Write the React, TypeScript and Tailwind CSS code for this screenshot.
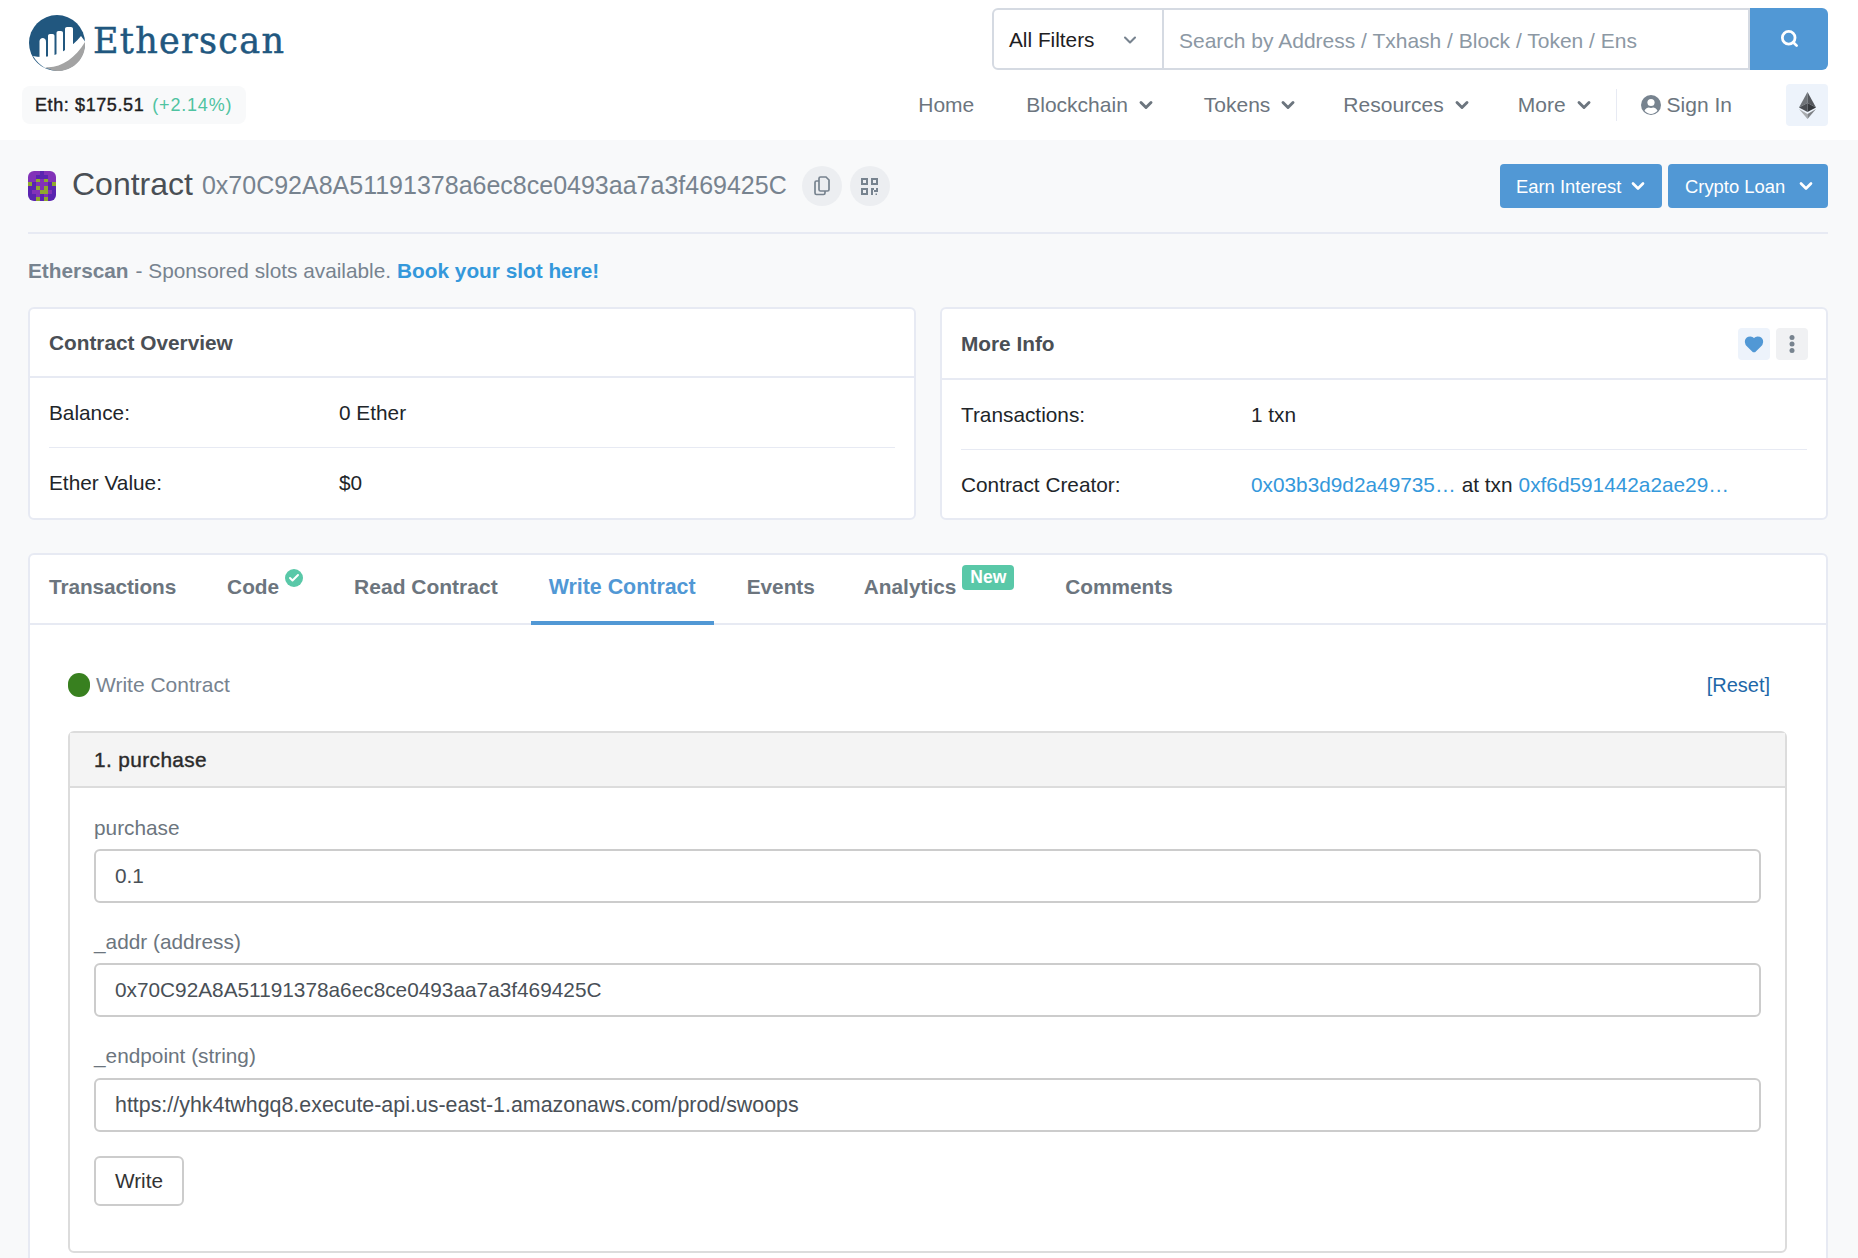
import type { ReactNode } from "react";
import { ChevronDown, Search, Heart, Check } from "lucide-react";

const navItems = [
  { label: "Blockchain", margin: "mr-[48px]" },
  { label: "Tokens", margin: "mr-[45px]" },
  { label: "Resources", margin: "mr-[46px]" },
  { label: "More", margin: "mr-[22px]" },
];

const Logo = () => (
  <svg width="56" height="56" viewBox="0 0 56 56" className="shrink-0">
    <circle cx="28" cy="28" r="28" fill="#21577f" />
    <path d="M4 41C22 45 40 36 52 21L57 28C46 44 30 55 16 53 11 50 7 46 4 41z" fill="#fff" />
    <path d="M16 52C30 54 46 44 56 27 57 44 44 56 28 56 24 56 20 54 16 52z" fill="#a3a3a3" />
    <path d="M10.5 44V26.5c0-2 1.5-3.500 3.200-3.500S17 24.500 17 26.500V44z" fill="#fff" />
    <path d="M19 44V21c0-1.200.8-2 2-2h2.500c1.200 0 2 .8 2 2v23z" fill="#fff" />
    <path d="M27.500 42V18c0-1.200.8-2 2-2H32c1.200 0 2 .8 2 2v24z" fill="#fff" />
    <path d="M36 38V14c0-1.200.8-2 2-2h4c1.200 0 2 .8 2 2v20z" fill="#fff" />
  </svg>
);

const TokenIcon = () => {
  const cells = "pppdppp" + "ppdddpp" + "ppgpgpp" + "gdpppdg" + "ddgpgdd" + "dppggpd" + "ddpdpdd" + "ddgdgdd";
  return (
    <div className="w-7 h-[30px] rounded-md overflow-hidden grid grid-cols-7 grid-rows-8 shrink-0">
      {cells.split("").map((c, i) => (
        <div key={i} className={c === "g" ? "bg-[#8fa82e]" : c === "d" ? "bg-[#5a24b0]" : "bg-[#8232b8]"} />
      ))}
    </div>
  );
};

const CopyIcon = () => (
  <svg width="16" height="20" viewBox="0 0 16 20" fill="none" stroke="#77838f" strokeWidth="1.700">
    <path d="M5 2.500c0-.8.5-1.500 1.500-1.500H12l3 3v9.500c0 .8-.7 1.500-1.500 1.500h-7C5.500 15 5 14.300 5 13.500z" />
    <path d="M5 5H2.500C1.500 5 1 5.700 1 6.500v10.500c0 .8.500 1.500 1.500 1.500h7c1 0 1.500-.7 1.500-1.500V15" />
  </svg>
);

const QrIcon = () => (
  <svg width="17" height="17" viewBox="0 0 17 17" fill="#77838f">
    <path fillRule="evenodd" d="M0 0h7v7H0zM2 2v3h3V2zM10 0h7v7h-7zM12 2v3h3V2zM0 10h7v7H0zM2 12v3h3v-3z" />
    <path d="M10 10h3v2h2v-2h2v4h-4v-2h-1v5h-2zM14.500 15.500H16V17h-1.500z" />
  </svg>
);

const UserIcon = () => (
  <svg width="20" height="20" viewBox="0 0 20 20" className="shrink-0">
    <circle cx="10" cy="10" r="10" fill="#77838f" />
    <circle cx="10" cy="7.500" r="3.600" fill="#fff" />
    <path d="M3.500 15.800c1-2.300 3-3.300 4.200-3.300 1.500.6 3.100.6 4.600 0 1.200 0 3.200 1 4.200 3.300C14.800 17.800 12.500 19 10 19s-4.800-1.200-6.500-3.200z" fill="#fff" />
  </svg>
);

const EthIcon = () => (
  <svg width="17" height="27" viewBox="0 0 17 27">
    <path d="M8.500 0v11L0 15.500z" fill="#6f7378" />
    <path d="M8.500 0v11l8.500 4.500z" fill="#55585d" />
    <path d="M8.500 11L0 15.500l8.500 4.500z" fill="#4a4d52" />
    <path d="M8.500 11l8.500 4.500-8.500 4.500z" fill="#35383c" />
    <path d="M0 17l8.500 5v5z" fill="#a8abae" />
    <path d="M17 17l-8.500 5v5z" fill="#7f8286" />
  </svg>
);

const Dots = () => (
  <svg width="6" height="20" viewBox="0 0 6 20" fill="#77838f">
    <circle cx="3" cy="3.500" r="2.500" />
    <circle cx="3" cy="10" r="2.500" />
    <circle cx="3" cy="16.500" r="2.500" />
  </svg>
);

const Field = ({ label, value, big }: { label: string; value: string; big?: boolean }) => (
  <div className={big ? "mb-[24px]" : "mb-[25px]"}>
    <div className={`text-[#6c757e] leading-[28px] ${big ? "mb-[8px]" : "mb-[7px]"}`}>{label}</div>
    <div className={`h-[54px] border-2 border-[#ccc] rounded-md bg-white flex items-center px-[19px] text-[#495057] ${big ? "text-[21.4px]" : ""}`}>
      {value}
    </div>
  </div>
);

const Tab = ({ children, className = "mr-[15px]" }: { children: ReactNode; className?: string }) => (
  <div className={`h-[68px] flex items-center px-[18px] pb-[5px] whitespace-nowrap ${className}`}>{children}</div>
);

export default function App() {
  return (
    <div className="h-[1258px] overflow-hidden bg-[#f8f9fa] font-['Liberation_Sans',Arial,sans-serif] text-[20.8px] text-[#212529]">
      {/* header */}
      <header className="h-[140px] bg-white flex justify-between pl-[22px] pr-[30px]">
        <div>
          <div className="flex items-start gap-[9px] pl-[7px] pt-[15px] h-[86px]">
            <Logo />
            <span className="font-['DejaVu_Serif',serif] text-[35px] leading-[52px] text-[#21577f] tracking-[1.3px] [-webkit-text-stroke:0.5px_#21577f] -ml-[1px]">Etherscan</span>
          </div>
          <div className="w-[224px] h-[38px] rounded-lg bg-[#f8f9fa] flex items-center pl-[13px] text-[18px] tracking-[0.6px] whitespace-nowrap">
            <span className="text-[#1e2022] [-webkit-text-stroke:0.4px_#1e2022]">Eth: $175.51</span>
            <span className="text-[#4fc3a1] ml-[8px] tracking-[0.8px]">(+2.14%)</span>
          </div>
        </div>
        <div className="w-[920px] pt-[8px]">
          <div className="flex h-[62px] ml-auto w-[836px]">
            <div className="w-[172px] border-2 border-[#d5dae2] rounded-l-md flex items-center justify-between pl-[15px] pr-[22px] pt-[2px] text-[#1e2022]">
              All Filters
              <ChevronDown size={20} strokeWidth={2.500} className="text-[#77838f]" />
            </div>
            <div className="flex-1 border-2 border-l-0 border-[#d5dae2] flex items-center pl-[15px] pt-[3px] text-[21px] text-[#8c98a4]">
              Search by Address / Txhash / Block / Token / Ens
            </div>
            <div className="w-[78px] bg-[#5198d5] rounded-r-md flex items-center justify-center text-white">
              <Search size={19} strokeWidth={3.500} className="-mt-[2px]" />
            </div>
          </div>
          <nav className="flex items-center justify-end h-[42px] mt-[14px] text-[#6c757e] text-[21px] whitespace-nowrap">
            <span className="mr-[52px]">Home</span>
            {navItems.map((n) => (
              <span key={n.label} className={`flex items-center gap-[8px] ${n.margin}`}>
                {n.label}
                <ChevronDown size={20} strokeWidth={3.500} />
              </span>
            ))}
            <div className="w-px h-[32px] bg-[#e7eaf3] mr-[24px]" />
            <UserIcon />
            <span className="ml-[6px] mr-[54px]">Sign In</span>
            <div className="w-[42px] h-[42px] shrink-0 rounded bg-[#edf3fb] flex items-center justify-center">
              <EthIcon />
            </div>
          </nav>
        </div>
      </header>

      <div className="ml-[28px] mr-[30px]">
        {/* title */}
        <div className="flex items-center justify-between h-[94px] border-b-2 border-[#e7eaf3]">
          <div className="flex items-center">
            <TokenIcon />
            <span className="ml-[16px] text-[32px] text-[#4a4f55] -mt-[5px]">Contract</span>
            <span className="ml-[9px] text-[25px] text-[#77838f]">0x70C92A8A51191378a6ec8ce0493aa7a3f469425C</span>
            <div className="ml-[15px] w-10 h-10 rounded-full bg-[#eceef1] flex items-center justify-center">
              <CopyIcon />
            </div>
            <div className="ml-2 w-10 h-10 rounded-full bg-[#eceef1] flex items-center justify-center">
              <QrIcon />
            </div>
          </div>
          <div className="flex gap-[6px] text-white text-[18.400px]">
            <div className="w-[162px] h-[44px] bg-[#5198d5] rounded flex items-center justify-between pl-[16px] pr-[14px]">
              <span className="pt-[2px]">Earn Interest</span> <ChevronDown size={20} strokeWidth={3.200} />
            </div>
            <div className="w-[160px] h-[44px] bg-[#5198d5] rounded flex items-center justify-between pl-[17px] pr-[12px]">
              <span className="pt-[2px]">Crypto Loan</span> <ChevronDown size={20} strokeWidth={3.200} />
            </div>
          </div>
        </div>

        <div className="h-[73px] flex items-center text-[#77838f]">
          <b>Etherscan</b>
          <span className="ml-[7px]">- Sponsored slots available.</span>
          <b className="ml-[6px] text-[#3498db]">Book your slot here!</b>
        </div>

        {/* overview */}
        <div className="grid grid-cols-2 gap-[24px]">
          <div className="h-[213px] bg-white border-2 border-[#e7eaf3] rounded-md">
            <div className="h-[69px] border-b-2 border-[#e7eaf3] flex items-center px-[19px] font-bold text-[#4a4f55]">Contract Overview</div>
            <div className="mx-[19px] h-[70px] border-b border-[#e7eaf3] flex items-center">
              <span className="w-[290px]">Balance:</span>
              <span>0 Ether</span>
            </div>
            <div className="mx-[19px] h-[70px] flex items-center">
              <span className="w-[290px]">Ether Value:</span>
              <span>$0</span>
            </div>
          </div>
          <div className="h-[213px] bg-white border-2 border-[#e7eaf3] rounded-md">
            <div className="h-[71px] border-b-2 border-[#e7eaf3] flex items-center justify-between pr-[18px] pl-[19px] font-bold text-[#4a4f55]">
              More Info
              <div className="flex gap-[6px]">
                <div className="w-8 h-8 rounded bg-[#edf3fb] flex items-center justify-center text-[#5198d5]">
                  <Heart size={20} fill="currentColor" />
                </div>
                <div className="w-8 h-8 rounded bg-[#f0f1f3] flex items-center justify-center">
                  <Dots />
                </div>
              </div>
            </div>
            <div className="mx-[19px] h-[70px] border-b border-[#e7eaf3] flex items-center">
              <span className="w-[290px]">Transactions:</span>
              <span>1 txn</span>
            </div>
            <div className="mx-[19px] h-[68px] pt-[2px] flex items-center whitespace-nowrap">
              <span className="w-[290px]">Contract Creator:</span>
              <span className="text-[#3498db]">0x03b3d9d2a49735…</span>
              <span className="mx-[6px]">at txn</span>
              <span className="text-[#3498db]">0xf6d591442a2ae29…</span>
            </div>
          </div>
        </div>

        {/* tabs */}
        <div className="mt-[33px] bg-white border-2 border-[#e7eaf3] rounded-t-md h-[800px]">
          <div className="h-[70px] border-b-2 border-[#e7eaf3] flex pl-px font-bold text-[#6c757e]">
            <Tab><span className="tracking-[-0.1px]">Transactions</span></Tab>
            <Tab>
              Code
              <span className="ml-[6px] -translate-y-[9px] w-[18px] h-[18px] rounded-full bg-[#59c8a8] flex items-center justify-center text-white">
                <Check size={12} strokeWidth={4} />
              </span>
            </Tab>
            <Tab><span className="text-[21px]">Read Contract</span></Tab>
            <div className="h-[70px] flex items-center px-[18px] mr-[15px] pb-[3px] text-[21.4px] text-[#5198d5] border-b-[4px] border-[#5198d5] pt-[1px] whitespace-nowrap">Write Contract</div>
            <Tab className="mr-[13px]">Events</Tab>
            <Tab>
              Analytics
              <span className="ml-[6px] -translate-y-[9px] w-[52px] h-[25px] rounded-sm bg-[#59c8a8] flex items-center justify-center text-white text-[17.500px]">New</span>
            </Tab>
            <Tab>Comments</Tab>
          </div>

          <div className="pt-[38px] pl-[38px] pr-[39px]">
            <div className="flex items-center justify-between h-[44px] mb-[24px] pr-[17px] text-[21px]">
              <div className="flex items-center gap-[6px] text-[#77838f]">
                <span className="w-[22px] h-[24px] rounded-full bg-[#38801f]" />
                Write Contract
              </div>
              <span className="text-[20px] text-[#1e67a8]">[Reset]</span>
            </div>

            <div className="border-2 border-[#dcdcdc] rounded-md h-[522px]">
              <div className="h-[55px] bg-[#f4f4f4] border-b-2 border-[#dcdcdc] flex items-center px-[24px] text-[#2b2b2b] tracking-[0.4px] [-webkit-text-stroke:0.4px_#2b2b2b]">1. purchase</div>
              <div className="px-[24px] pt-[26px]">
                <Field label="purchase" value="0.1" />
                <Field label="_addr (address)" value="0x70C92A8A51191378a6ec8ce0493aa7a3f469425C" />
                <Field label="_endpoint (string)" value="https://yhk4twhgq8.execute-api.us-east-1.amazonaws.com/prod/swoops" big />
                <div className="w-[90px] h-[50px] border-2 border-[#ccc] rounded-md flex items-center justify-center text-[#333]">Write</div>
              </div>
            </div>
          </div>
        </div>
      </div>
    </div>
  );
}
